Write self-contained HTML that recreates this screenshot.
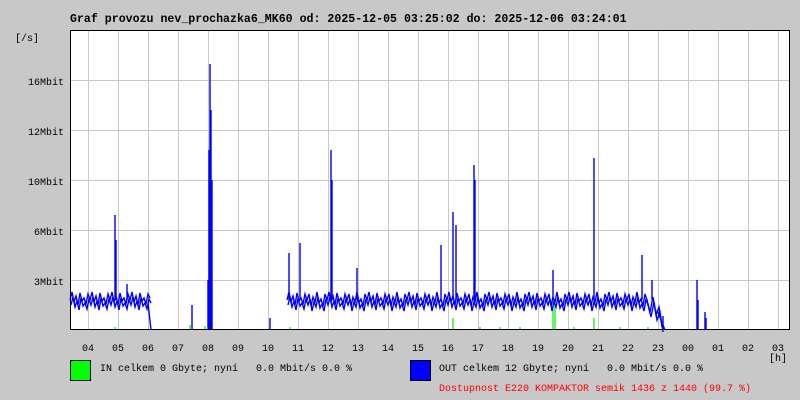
<!DOCTYPE html>
<html><head><meta charset="utf-8"><style>
body{margin:0;width:800px;height:400px;background:#c8c8c8;overflow:hidden;font-family:"Liberation Mono",monospace;}
svg{position:absolute;left:0;top:0}
text{white-space:pre}
</style></head><body>
<svg width="800" height="400" viewBox="0 0 800 400" font-family="Liberation Mono, monospace" xml:space="preserve">
<defs>
<path id="bandA" d="M70 300
l2 -8 l2 10 l2 -6 l2 9 l2 -12 l2 8 l2 -3 l2 6 l2 -10 l2 6
l2 -8 l2 10 l2 -6 l2 9 l2 -12 l2 8 l2 -3 l2 6 l2 -10 l2 6
l2 -8 l2 10 l2 -6 l2 9 l2 -12 l2 8 l2 -3 l2 6 l2 -10 l2 6
l2 -8 l2 10 l2 -6 l2 9 l2 -12 l2 8 l2 -3 l2 6 l2 -10 l2 4"/>
<path id="bandB" d="M287 300
l2 -8 l2 10 l2 -6 l2 9 l2 -12 l2 8 l2 -3 l2 6 l2 -10 l2 6
l2 -6 l2 12 l2 -9 l2 5 l2 -10 l2 11 l2 -4 l2 7 l2 -12 l2 6
l2 -8 l2 10 l2 -6 l2 9 l2 -12 l2 8 l2 -3 l2 6 l2 -10 l2 6
l2 -6 l2 12 l2 -9 l2 5 l2 -10 l2 11 l2 -4 l2 7 l2 -12 l2 6
l2 -8 l2 10 l2 -6 l2 9 l2 -12 l2 8 l2 -3 l2 6 l2 -10 l2 6
l2 -6 l2 12 l2 -9 l2 5 l2 -10 l2 11 l2 -4 l2 7 l2 -12 l2 6
l2 -8 l2 10 l2 -6 l2 9 l2 -12 l2 8 l2 -3 l2 6 l2 -10 l2 6
l2 -6 l2 12 l2 -9 l2 5 l2 -10 l2 11 l2 -4 l2 7 l2 -12 l2 6
l2 -8 l2 10 l2 -6 l2 9 l2 -12 l2 8 l2 -3 l2 6 l2 -10 l2 6
l2 -6 l2 12 l2 -9 l2 5 l2 -10 l2 11 l2 -4 l2 7 l2 -12 l2 6
l2 -8 l2 10 l2 -6 l2 9 l2 -12 l2 8 l2 -3 l2 6 l2 -10 l2 6
l2 -6 l2 12 l2 -9 l2 5 l2 -10 l2 11 l2 -4 l2 7 l2 -12 l2 6
l2 -8 l2 10 l2 -6 l2 9 l2 -12 l2 8 l2 -3 l2 6 l2 -10 l2 6
l2 -6 l2 12 l2 -9 l2 5 l2 -10 l2 11 l2 -4 l2 7 l2 -12 l2 6
l2 -8 l2 10 l2 -6 l2 9 l2 -12 l2 8 l2 -3 l2 6 l2 -10 l2 6
l2 -6 l2 12 l2 -9 l2 5 l2 -10 l2 11 l2 -4 l2 7 l2 -12 l2 6
l2 -8 l2 10 l2 -6 l2 9 l2 -12 l2 8 l2 -3 l2 6 l2 -10 l2 6
l2 -6 l2 12 l2 -9 l2 5 l2 -10 l2 11 l2 -4 l2 7 l2 -12 l2 6
l3 12 l3 -15 l3 18 l3 -8 l3 20"/>
</defs>
<text x="70" y="22" font-size="11.6" font-weight="bold" fill="#000">Graf provozu nev_prochazka6_MK60 od: 2025-12-05 03:25:02 do: 2025-12-06 03:24:01</text>
<text x="15" y="41" font-size="10">[/s]</text>
<g font-size="10" text-anchor="end">
<text x="64" y="85">16Mbit</text>
<text x="64" y="135">12Mbit</text>
<text x="64" y="185">10Mbit</text>
<text x="64" y="235">6Mbit</text>
<text x="64" y="285">3Mbit</text>
</g>
<rect x="70" y="30" width="720" height="300" fill="#fff"/>
<g stroke="#c8c8c8" stroke-width="1">
<path d="M88.5 30V330M118.5 30V330M148.5 30V330M178.5 30V330M208.5 30V330M238.5 30V330M268.5 30V330M298.5 30V330M328.5 30V330M358.5 30V330M388.5 30V330M418.5 30V330M448.5 30V330M478.5 30V330M508.5 30V330M538.5 30V330M568.5 30V330M598.5 30V330M628.5 30V330M658.5 30V330M688.5 30V330M718.5 30V330M748.5 30V330M778.5 30V330"/>
<path d="M70 80.5H790M70 130.5H790M70 180.5H790M70 230.5H790M70 280.5H790"/>
</g>
<g fill="none" stroke="#00ee00" stroke-width="1.2">
<path d="M115 330V327M453 330V318M553 330V296M555 330V300M594 330V318M190 330V325M205 330V326M210 330V326M290 330V327M480 330V327M500 330V327M520 330V327M574 330V327M620 330V327M648 330V327"/>
</g>
<g fill="none" stroke="#0000ff" stroke-width="1.4">
<use href="#bandA"/>
<use href="#bandA" transform="translate(1,5)"/>
<use href="#bandB"/>
<use href="#bandB" transform="translate(1,5)"/>
<path d="M148 303L151 330M657 310L665 330"/>
<path d="M115 300V215M116 300V240M127 300V284M208 330V280M209 330V150M210 330V64M211 330V110M212 330V180M192 330V305M270 330V318M289 300V253M300 300V243M331 300V150M332 300V180M357 300V268M441 300V245M453 300V212M456 300V225M474 300V165M475 300V180M553 300V270M594 300V158M642 300V255M652 300V280M697 330V280M698 330V300M705 330V312M706 330V318M663 330V316"/>
</g>
<rect x="70.5" y="30.5" width="719" height="299" fill="none" stroke="#000" stroke-width="1"/>
<g font-size="10" text-anchor="middle">
<text x="88" y="351">04</text><text x="118" y="351">05</text><text x="148" y="351">06</text><text x="178" y="351">07</text><text x="208" y="351">08</text><text x="238" y="351">09</text><text x="268" y="351">10</text><text x="298" y="351">11</text><text x="328" y="351">12</text><text x="358" y="351">13</text><text x="388" y="351">14</text><text x="418" y="351">15</text><text x="448" y="351">16</text><text x="478" y="351">17</text><text x="508" y="351">18</text><text x="538" y="351">19</text><text x="568" y="351">20</text><text x="598" y="351">21</text><text x="628" y="351">22</text><text x="658" y="351">23</text><text x="688" y="351">00</text><text x="718" y="351">01</text><text x="748" y="351">02</text><text x="778" y="351">03</text>
<text x="778" y="361">[h]</text>
</g>
<rect x="70.5" y="360.5" width="20" height="20" fill="#00ff00" stroke="#000"/>
<text x="100" y="371" font-size="10">IN celkem 0 Gbyte; nyní   0.0 Mbit/s 0.0 %</text>
<rect x="410.5" y="360.5" width="20" height="20" fill="#0000ff" stroke="#000"/>
<text x="439" y="371" font-size="10">OUT celkem 12 Gbyte; nyní   0.0 Mbit/s 0.0 %</text>
<text x="439" y="391" font-size="10" fill="#ff0000">Dostupnost E220 KOMPAKTOR semik 1436 z 1440 (99.7 %)</text>
</svg>
</body></html>
